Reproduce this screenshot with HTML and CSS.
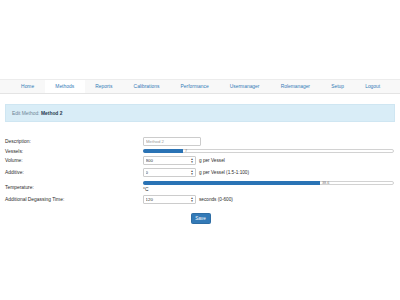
FILE: index.html
```html
<html>
<head>
  <meta http-equiv="Content-type" content="text/html;charset=UTF-8">
  <title>Edit Method</title>
  <link rel="stylesheet" href="styles.css">
</head>
<body>
  <div id="navbar">
    <ul>
      <li><a href="#">Home</a></li>
      <li class="active"><a href="#">Methods</a></li>
      <li><a href="#">Reports</a></li>
      <li><a href="#">Calibrations</a></li>
      <li><a href="#">Performance</a></li>
      <li><a href="#">Usermanager</a></li>
      <li><a href="#">Rolemanager</a></li>
      <li><a href="#">Setup</a></li>
      <li><a href="#">Logout</a></li>
    </ul>
  </div>

  <div class="alert">
    Edit Method: <b>Method 2</b>
  </div>

  <div id="form">
    <div class="row r-desc">
      <label>Description:</label>
      <input class="textInput" type="text" value="Method 2">
    </div>
    <div class="row r-vessels">
      <label>Vessels:</label>
      <div class="slider">
        <div class="fill" style="width:40px"></div>
        <span class="val">7</span>
      </div>
    </div>
    <div class="row r-volume">
      <label>Volume:</label>
      <div class="numBox"><input type="text" value="900"><span class="spin"><i>&#9650;</i><i>&#9660;</i></span></div>
      <span class="unit">g per Vessel</span>
    </div>
    <div class="row r-additive">
      <label>Additive:</label>
      <div class="numBox"><input type="text" value="0"><span class="spin"><i>&#9650;</i><i>&#9660;</i></span></div>
      <span class="unit">g per Vessel (1.5-1:100)</span>
    </div>
    <div class="row r-temp">
      <label>Temperature:</label>
      <div class="col">
        <div class="slider">
          <div class="fill" style="width:177px"></div>
          <span class="val">38.6</span>
        </div>
        <div class="deg">&deg;C</div>
      </div>
    </div>
    <div class="row r-degas">
      <label>Additional Degassing Time:</label>
      <div class="numBox"><input type="text" value="120"><span class="spin"><i>&#9650;</i><i>&#9660;</i></span></div>
      <span class="unit">seconds (0-600)</span>
    </div>
    <div class="actions">
      <div class="button">Save</div>
    </div>
  </div>
</body>
</html>
```
FILE: styles.css
```css
body{
    margin:0;
    background:white;
    font-family:"Liberation Sans", Arial, sans-serif;
    font-size:4.9px;
    color:#2b2b2b;
}
#navbar{
    margin-top:79px;
    height:15px;
    background:#f8f8f8;
    border-top:1px solid #ececec;
    border-bottom:1px solid #e4e4e4;
    box-sizing:border-box;
}
#navbar ul{
    list-style:none;
    margin:0;
    padding:0 0 0 10.5px;
    display:flex;
    height:100%;
}
#navbar li{
    display:flex;
    align-items:center;
}
#navbar li a{
    padding:0 10.6px;
    line-height:13px;
    font-size:4.9px;
    color:#337ab7;
    text-decoration:none;
}
#navbar li.active a{
    background:white;
}

.alert{
    margin:10px 5px 0 5px;
    height:18px;
    box-sizing:border-box;
    padding:0 6px;
    display:flex;
    align-items:center;
    background:#d9edf7;
    border:1px solid #cfe6f2;
    color:#6d8595;
}
.alert b{
    color:#1e3a4e;
    margin-left:1.5px;
}

#form{
    margin-top:15px;
    padding:0 6px 0 5px;
}
.row{
    display:flex;
    align-items:center;
}
.row label{
    width:138px;
    flex:none;
}
.r-desc{ height:9px; margin-bottom:3px; }
.r-vessels{ height:4px; margin-bottom:3px; }
.r-volume{ height:9px; margin-bottom:3px; }
.r-additive{ height:9px; margin-bottom:4px; }
.r-temp{ height:12px; margin-bottom:2px; }
.r-degas{ height:9px; }

.textInput{
    width:58px;
    height:9px;
    box-sizing:border-box;
    border:1px solid #cccccc;
    border-radius:1px;
    padding:0 2px;
    font-family:inherit;
    font-size:4.3px;
    color:#9a9a9a;
    outline:none;
}
.numBox{
    width:53px;
    height:9px;
    box-sizing:border-box;
    border:1px solid #cccccc;
    border-radius:1px;
    display:flex;
    align-items:center;
}
.numBox input{
    flex:1;
    min-width:0;
    border:0;
    padding:0 1.5px;
    height:7px;
    font-family:inherit;
    font-size:4.4px;
    color:#333333;
    outline:none;
}
.spin{
    width:4px;
    margin-right:1px;
    display:flex;
    flex-direction:column;
    align-items:center;
    color:#444444;
}
.spin i{
    font-style:normal;
    font-size:3px;
    line-height:3px;
}
.unit{
    margin-left:3px;
    font-size:4.7px;
}

.col{
    flex:1;
    display:flex;
    flex-direction:column;
    height:100%;
}
.slider{
    flex:1;
    height:4px;
    box-sizing:border-box;
    border:1px solid #d2d2d2;
    border-radius:2px;
    display:flex;
    align-items:center;
}
.col .slider{
    flex:none;
}
.slider .fill{
    height:4px;
    margin-left:-1px;
    background:#2a73b5;
    border-radius:2px 0 0 2px;
}
.slider .val{
    font-size:3.8px;
    line-height:4px;
    color:#7a7a7a;
    padding-left:2px;
}
.deg{
    margin-top:2px;
    line-height:6px;
}

.actions{
    margin-top:9px;
    display:flex;
    justify-content:center;
    padding-left:2px;
}
div.button{
    width:20px;
    height:11px;
    box-sizing:border-box;
    background:#337ab7;
    border:1px solid #2e6da4;
    border-radius:1.5px;
    color:white;
    font-size:4.6px;
    display:flex;
    align-items:center;
    justify-content:center;
    cursor:pointer;
}
```
